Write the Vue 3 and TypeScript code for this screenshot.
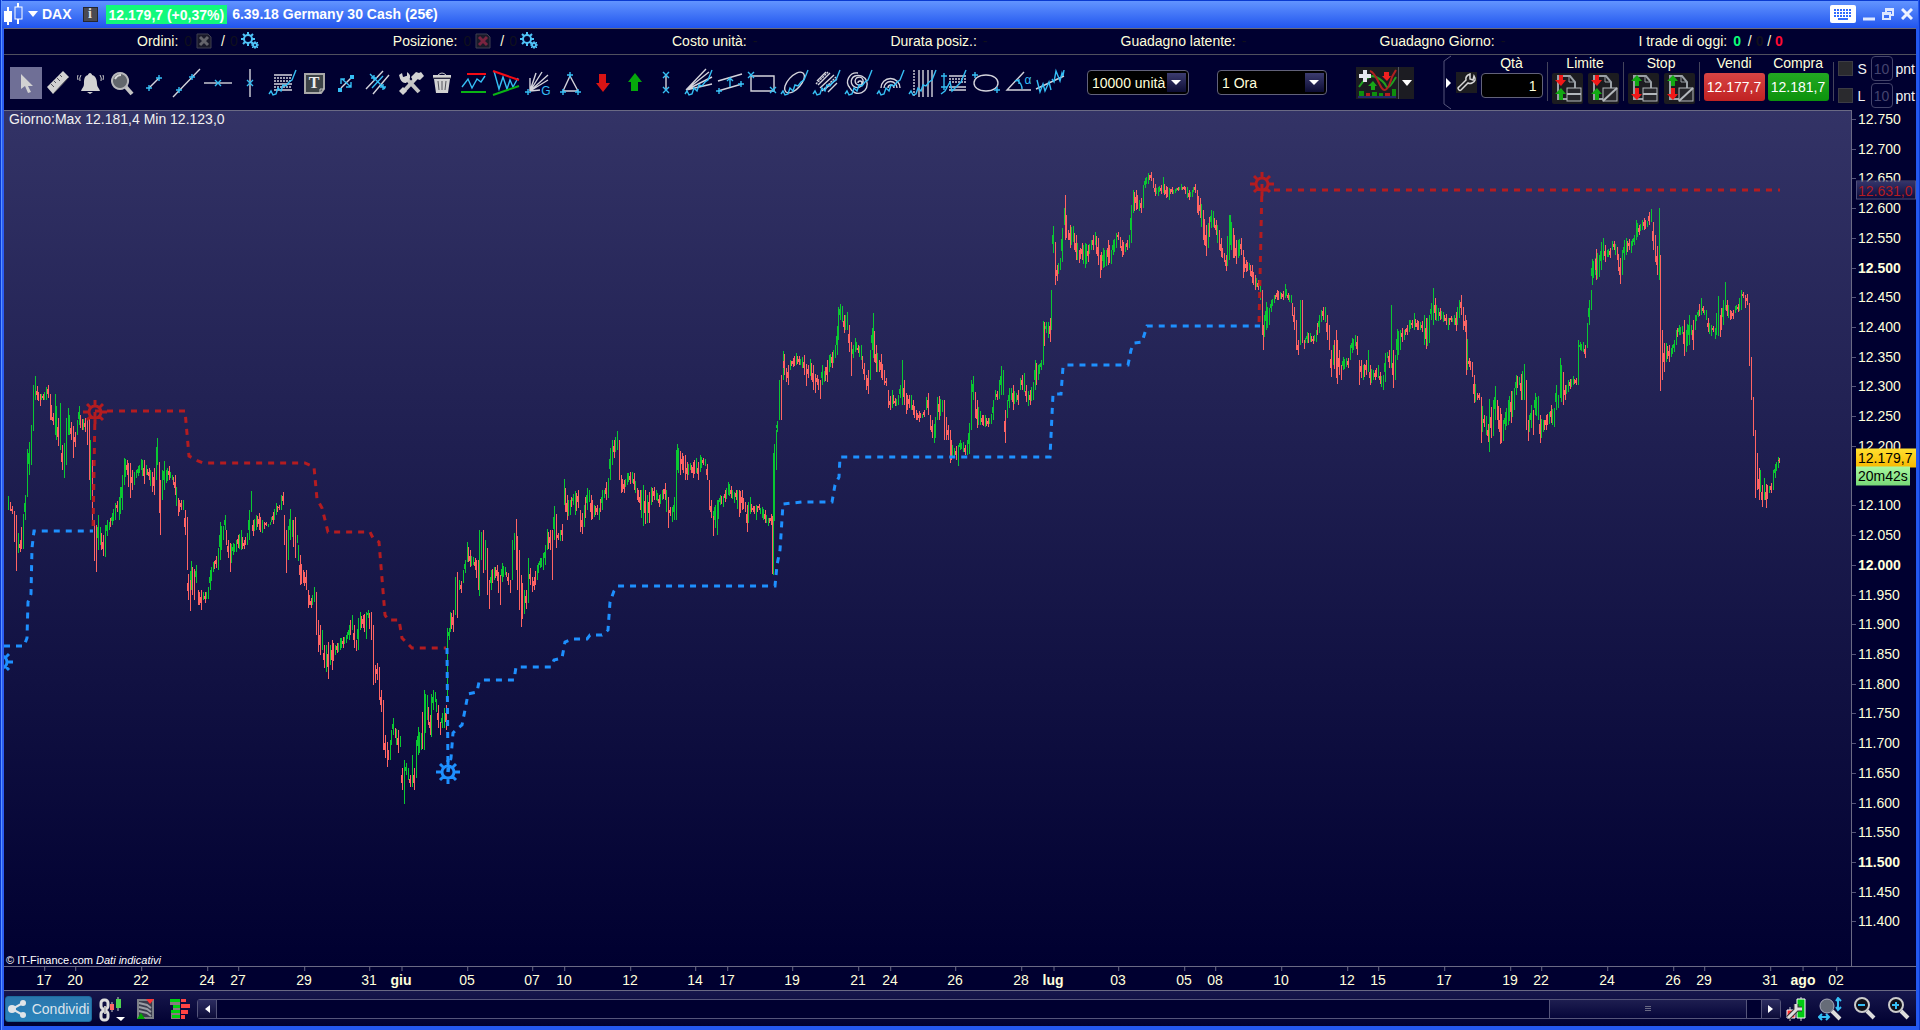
<script setup lang="ts">
type Shape = [kind: string, d: string]
interface Tool {
  name: string
  shapes: Shape[]
  label?: { x: number; y: number; text: string; cls: string }
}

const plus = (x: number, y: number) => `M${x - 3} ${y}h6M${x} ${y - 3}v6`
const cross = (x: number, y: number) => `M${x - 3} ${y - 3}l6 6M${x - 3} ${y + 3}l6-6`
const curve = 'M3 27l2-3 2 4 3-1 2-6 3 3 2-6 3 1 3-4 3-2 4-10'

const tools: Tool[] = [
  { name: 'Selezione', shapes: [['fill', 'M11 7v15l4-3 3 7 3-1-3-6h5z']] },
  { name: 'Righello', shapes: [['fill', 'M5 20L21 4l6 6L11 27z'], ['dark', 'M9 17l3 3M12 14l2 2M15 11l3 3M18 8l2 2M12 26l14-15']] },
  {
    name: 'Allarme',
    shapes: [
      ['fill', 'M16 6c-1 0-2 1-2 2-4 1-4 5-4 9 0 3-2 4-3 7h19c-1-3-3-4-3-7 0-4-1-8-5-9 0-1-1-2-2-2z'],
      ['fill', 'M13 25h6l-3 2z'],
      ['thin', 'M7 8q-2 3-1 6M4 8q-1 2 0 5M26 8q2 3 1 6M29 8q1 2 0 5'],
    ],
  },
  { name: 'Lente', shapes: [['handle', 'M19 19l7 8'], ['lens', 'M14 6a8 8 0 1 0 .1 0z'], ['shine', 'M9 12q2-4 6-4']] },
  { name: 'Segmento', shapes: [['line', 'M11 21L21 11'], ['blue', plus(11, 21) + plus(21, 11)]] },
  { name: 'Retta', shapes: [['line', 'M3 30L30 2'], ['blue', plus(9, 23) + plus(22, 10)]] },
  { name: 'Orizzontale', shapes: [['line', 'M2 16h28'], ['blue', cross(16, 16)]] },
  { name: 'Verticale', shapes: [['line', 'M16 2v28'], ['blue', cross(16, 16)]] },
  { name: 'Ritracciamenti', shapes: [['line', 'M8 8h18M8 17h18M8 23h18'], ['dots', 'M8 11h18M8 14h18M8 20h18'], ['blue', curve]] },
  { name: 'Testo', shapes: [['box', 'M7 7h19v15l-3 4H7z'], ['thin', 'M22 26v-4h4']], label: { x: 16, y: 21, text: 'T', cls: 'serif' } },
  { name: 'Estensione', shapes: [['line', 'M11 21L21 11'], ['bluefill', 'M8 21h4v4H8zM20 8h4v4h-4z'], ['blue', 'M11 17v-5h4M12 12l9 8M21 15v5h-5']] },
  { name: 'Parallele', shapes: [['line', 'M4 22L21 4M11 27L27 8'], ['blue', 'M8 7l15 15' + plus(12, 11) + plus(21, 20) + 'M10 21l11-12']] },
  {
    name: 'Strumenti',
    shapes: [['handle', 'M9 25L24 9'], ['handle', 'M11 10l14 15'], ['fill', 'M5 8l3-2 1 4 4-1v-4q5 3 2 8l-3 3q-5 1-7-8zM17 10l5-5 3 1 2-1 3 4-4 4-3-1-3 3z'], ['fill', 'M5 24l4-4 4 4-4 4z']],
  },
  {
    name: 'Cestino',
    shapes: [['fill', 'M8 12h16l-2 14H10zM7 8h18v3H7z'], ['thin', 'M12 8q4-4 8 0'], ['dark', 'M12 14l1 9M16 14v9M20 14l-1 9M7 11h18']],
  },
  { name: 'Supporto', shapes: [['blue', 'M4 20l6-8 4 9 5-9 4 3 4-6'], ['red', 'M9 7h19'], ['green', 'M3 25h25']] },
  { name: 'Triangoli', shapes: [['blue', 'M4 4l5 18 4-12 4 12 3-9 3 7 5-9'], ['red', 'M3 4l26 9'], ['green', 'M3 28l26-9']] },
  { name: 'Gann', shapes: [['line', 'M8 24V11M8 24L14 6M8 24L20 5M8 24L26 8M8 24l18-11M8 24l10-1'], ['blue', plus(6, 25)]], label: { x: 24, y: 28, text: 'G', cls: 'cyan' } },
  { name: 'Triangolo', shapes: [['line', 'M16 9L9 24h15z'], ['blue', plus(16, 8) + plus(9, 25) + plus(24, 25)]] },
  { name: 'Freccia giù', shapes: [['redfill', 'M13 7h7v9h4l-7 9-7-9h3z']] },
  { name: 'Freccia su', shapes: [['greenfill', 'M13 24h7v-9h4l-7-9-7 9h3z']] },
  { name: 'Misura', shapes: [['line', 'M16 9v14'], ['blue', cross(16, 8) + cross(16, 23)]] },
  { name: 'Ventaglio', shapes: [['line', 'M4 23L24 2M4 23L30 10M4 23l26-6M4 23L27 5'], ['blue', curve]] },
  { name: 'Canale', shapes: [['line', 'M4 14l24-7M4 24l24-7'], ['blue', plus(5, 24) + plus(27, 17) + 'M16 20v-8M13 14l3-3 3 3']] },
  { name: 'Rettangolo', shapes: [['line', 'M5 9h23v15H5z'], ['blue', cross(5, 8) + cross(27, 23)]] },
  { name: 'Ellisse inclinata', shapes: [['line', 'M8 25C2 19 18 1 25 6 31 11 16 30 8 25z'], ['blue', curve]] },
  { name: 'Linee di velocità', shapes: [['line', 'M7 14L16 5M8 18L20 6M10 21L24 8M14 23L27 12M18 25l9-9'], ['dots', 'M6 17L18 5M12 24L26 10'], ['blue', curve]] },
  { name: 'Spirale', shapes: [['line', 'M16 16a2 2 0 1 1 2 2 4 4 0 1 1 3-5 6 6 0 1 1-8-4 9 9 0 1 1-5 12'], ['line', 'M8 21a9 9 0 0 1 8-15'], ['blue', curve]] },
  { name: 'Archi', shapes: [['line', 'M7 21a9 9 0 0 1 19 0M10 21a6 6 0 0 1 13 0M14 21a3 3 0 0 1 6 0'], ['blue', curve]] },
  { name: 'Cicli', shapes: [['line', 'M13 3v27M17 3v27M22 3v27M26 3v27'], ['dots', 'M8 3v27'], ['blue', curve]] },
  { name: 'Estensioni', shapes: [['line', 'M11 9h17M11 20h17M11 23h17'], ['dots', 'M11 12h17M11 15h17'], ['blue', 'M3 9h6M6 6v17M3 20h6M3 27l4-3 5-9 2 9 5-5 4-4 5-12']] },
  { name: 'Ellisse', shapes: [['line', 'M16 8c16 0 16 16 0 16s-16-16 0-16z'], ['blue', plus(5, 8) + plus(27, 23)]] },
  { name: 'Angolo', shapes: [['line', 'M22 5L5 23h24'], ['blue', 'M20 22q0-5-4-8M13 14l4-1v4']], label: { x: 26, y: 17, text: 'α', cls: 'cyan' } },
  { name: 'Regressione', shapes: [['line', 'M2 22L30 9'], ['blue', 'M3 13l3 12 3-8 2 7 4-9 2 8M18 12l2 3 2-11 4 10 2-8 1 3 1-6']] },
]

/* Intraday range of the hourly bars: position, top and bottom on the chart grid. */
const range = `
8 496 510,12 506 514,14 511 542,16 515 571,18 533 553,20 540 552,23 514 549,25 495 520,27 449 497,29 442 475,31 425 465,33 385 431,35 376 400,37 386 400,40 394 406,43 394 400,46 387 400,48 385 398,50 394 420,53 413 425,55 394 435,58 418 446,60 403 450,62 445 470,64 443 478,66 418 465,68 408 435,71 422 440,73 426 458,75 432 447,77 420 435,79 406 425,82 419 430,85 418 432,87 420 445,89 419 480,92 460 520,94 520 561,96 525 572,98 515 550,100 527 545,103 535 556,105 525 557,107 520 536,109 522 530,112 513 525,115 503 520,117 501 512,119 497 520,122 475 510,124 458 485,127 460 475,130 463 498,132 470 490,134 472 485,138 466 476,141 459 470,144 460 484,146 465 475,149 468 480,152 472 492,154 468 495,156 450 480,157 438 465,159 462 513,160 480 535,162 470 500,164 461 490,166 470 483,169 466 480,172 475 480,175 475 495,178 498 516,181 500 510,183 500 510,185 510 535,187 517 570,188 574 600,190 580 611,191 561 590,194 569 600,196 565 583,198 590 605,201 590 610,203 592 600,205 592 603,208 587 599,210 570 590,213 562 572,216 556 568,218 548 570,220 522 560,223 526 540,225 515 530,226 530 545,228 540 558,230 543 572,233 543 555,236 540 552,238 535 548,241 530 550,244 540 549,247 533 545,249 510 540,251 491 512,253 520 536,256 515 530,259 513 530,262 520 533,266 522 526,270 522 525,273 512 524,276 503 515,279 505 510,281 495 510,283 492 505,284 515 545,286 530 573,288 526 560,290 509 540,292 520 537,295 517 558,297 535 543,300 555 585,303 570 583,306 570 590,308 590 608,311 598 608,314 587 602,316 592 635,318 620 652,320 625 655,322 630 650,324 645 668,326 645 672,328 642 679,330 645 665,332 640 670,335 645 655,337 643 653,340 638 650,343 637 648,346 635 643,349 625 640,352 615 630,354 625 648,356 640 651,358 618 650,360 612 630,363 615 628,366 612 639,368 610 618,371 612 640,373 625 685,375 665 683,377 663 680,379 667 700,381 690 712,383 700 750,385 735 758,387 742 767,388 750 760,390 740 760,393 718 735,395 728 738,398 730 753,400 736 747,402 768 790,404 760 804,406 763 775,408 768 780,410 775 787,412 755 787,414 768 790,416 740 778,418 727 755,421 733 750,424 690 750,427 695 720,430 715 735,431 694 737,433 690 710,435 692 702,438 705 728,440 722 735,442 713 728,444 708 728,446 705 730,447 628 700,449 628 640,450 612 632,453 610 632,455 577 615,457 572 618,459 580 590,461 581 593,463 570 583,465 560 573,467 542 562,470 550 567,473 557 565,475 558 570,478 560 590,
479 530 596,481 532 560,483 530 573,485 540 570,487 548 595,489 580 609,491 570 590,494 567 580,497 565 581,500 575 605,502 563 582,505 567 575,508 573 585,510 580 593,512 540 580,514 533 550,516 519 570,519 550 610,521 575 627,524 590 614,526 590 609,528 558 603,530 568 585,532 577 592,534 577 590,537 565 580,540 558 568,543 553 570,545 545 565,547 529 550,550 530 550,552 530 580,554 506 540,556 514 548,558 533 540,560 530 541,562 524 541,564 479 505,567 495 520,570 500 515,573 494 505,575 491 515,578 490 508,580 510 532,582 513 534,584 505 527,587 488 510,589 490 502,591 495 520,594 505 517,597 505 515,599 508 520,602 490 510,604 490 498,606 482 500,608 478 498,610 448 480,612 440 465,614 440 458,617 431 450,619 440 480,621 475 493,624 480 493,627 473 485,630 472 484,632 472 483,634 473 490,637 488 500,640 490 510,643 485 526,645 490 524,647 495 523,649 492 523,651 487 505,654 487 500,656 490 500,659 495 507,662 490 500,665 483 500,668 497 528,670 507 516,672 507 522,674 497 520,676 450 520,677 444 470,680 451 475,682 453 470,685 455 480,687 462 480,690 463 470,693 462 478,696 458 473,698 462 480,700 455 472,703 458 465,705 459 466,707 464 480,709 480 510,711 500 518,713 515 536,714 507 520,717 500 535,720 495 505,723 496 507,725 490 502,728 482 495,731 486 498,734 492 503,736 490 500,739 490 517,742 490 510,745 502 512,747 505 532,750 497 514,753 506 512,756 505 520,759 504 510,762 507 518,765 510 523,768 518 526,771 514 525,
772 516 574,773 453 575,776 430 470,777 421 432,779 380 420,781 375 420,783 351 380,784 354 375,786 368 382,788 365 385,790 360 370,793 358 367,796 353 365,799 356 365,802 357 368,804 355 375,806 364 386,808 365 378,810 359 376,813 365 390,815 374 393,817 375 385,820 380 399,822 365 385,824 371 382,827 360 382,829 355 372,832 352 368,835 345 358,837 326 355,838 307 340,840 304 320,842 306 322,844 315 333,847 312 330,849 325 352,851 342 376,853 345 358,855 338 352,858 345 353,861 345 360,864 363 380,866 375 390,868 370 394,870 350 380,872 328 350,873 313 358,876 345 372,879 360 372,881 354 378,884 370 385,886 378 386,888 390 408,890 396 410,892 390 408,895 398 406,898 395 405,900 385 398,902 360 405,904 380 405,906 393 414,909 395 408,911 395 410,913 400 415,916 410 420,919 411 422,922 414 418,924 410 417,926 397 410,928 393 415,930 415 430,932 420 438,934 425 443,935 417 438,937 397 420,939 396 420,942 400 412,944 400 440,946 417 440,948 425 440,950 430 463,951 440 460,954 448 458,956 446 460,958 445 466,960 440 450,963 442 452,965 445 455,967 440 455,969 423 454,971 380 430,973 376 400,975 392 418,977 400 428,980 411 425,982 415 425,985 415 427,988 418 427,991 414 424,993 400 420,995 390 400,997 391 400,999 380 399,1001 366 395,1003 370 395,1005 410 443,1007 400 418,1009 388 408,1011 388 400,1013 385 410,1016 393 402,1018 390 405,1020 378 390,1022 375 390,1024 373 392,1026 385 402,1028 391 406,1030 390 405,1033 382 400,1035 360 390,1038 365 380,1041 360 370,
1043 321 365,1046 322 333,1048 322 338,1050 318 342,1051 290 330,1053 226 253,1055 242 285,1057 265 281,1060 258 270,1062 228 262,1064 208 225,1065 195 240,1068 230 240,1070 225 248,1073 226 242,1076 235 260,1079 250 263,1082 243 260,1085 243 268,1088 245 262,1091 240 250,1093 235 250,1095 232 245,1098 238 265,1100 255 278,1103 248 268,1106 250 266,1108 240 265,1111 250 264,1113 240 255,1116 233 248,1118 232 240,1120 237 248,1122 240 257,1125 244 252,1127 240 250,1129 235 248,1131 205 243,1133 190 213,1136 190 210,1139 200 211,1141 198 213,1143 185 208,1145 178 188,1148 173 184,1151 172 181,1153 178 188,1155 184 196,1158 187 196,1161 185 194,1163 177 193,1166 186 198,1169 188 200,1172 187 194,1175 189 193,1178 187 191,1181 184 190,1184 186 190,1187 187 198,1189 190 200,1192 190 197,1195 184 193,1197 190 213,1200 198 218,1203 210 240,1206 225 256,1208 223 248,1211 210 228,1213 211 227,1216 220 235,1219 230 250,1221 238 257,1224 253 262,1226 255 271,1229 215 260,1230 215 245,1233 228 258,1236 240 264,1238 240 258,1241 238 255,1243 250 278,1246 260 272,1249 263 270,1252 265 283,1255 275 290,1258 280 290,1260 281 300,1262 290 335,1263 325 350,1266 302 330,1269 308 325,1271 300 312,1274 295 303,1277 290 300,1280 292 299,1283 291 300,1285 284 298,1288 293 300,1291 295 303,1294 307 330,1296 320 350,1298 340 355,1300 300 345,1302 300 343,1304 340 349,1307 332 343,1310 333 342,1313 336 344,1316 330 342,1319 315 333,1321 310 322,1323 307 320,1325 307 322,1327 315 340,1329 325 350,1331 350 377,1333 345 365,1336 330 378,1337 340 384,1339 350 375,1341 365 380,1343 357 370,1346 358 367,1348 358 368,1350 345 360,1352 338 353,1355 335 346,1357 336 355,1359 360 385,1361 360 378,1363 365 380,1366 360 375,1368 350 372,1370 365 385,1373 370 380,1375 370 380,1378 365 378,1380 372 384,1383 375 390,1385 353 382,1387 352 358,1389 350 368,1391 305 368,1393 350 388,1395 355 380,1397 329 360,1400 330 350,1402 328 342,1404 330 340,1407 325 335,1409 320 332,1412 320 328,1414 313 330,1417 320 330,1420 322 330,1422 321 332,
1424 315 345,1426 318 349,1429 315 343,1431 303 320,1433 288 325,1435 298 320,1438 308 321,1440 308 320,1443 312 322,1446 314 325,1448 318 330,1451 316 322,1454 315 325,1456 312 331,1459 300 318,1461 295 315,1463 307 330,1465 315 332,1466 320 375,1469 358 367,1472 362 377,1474 375 403,1477 393 400,1479 393 400,1481 397 443,1484 415 427,1486 416 435,1488 424 442,1489 399 452,1491 407 438,1493 400 436,1495 386 420,1497 400 420,1500 408 444,1503 420 441,1505 412 430,1508 400 425,1511 391 423,1514 388 410,1516 375 395,1519 377 385,1521 374 400,1524 364 400,1526 380 430,1528 420 441,1531 405 428,1533 410 435,1535 393 415,1538 396 420,1540 415 443,1543 420 432,1546 415 430,1549 412 424,1551 405 423,1554 408 427,1556 385 410,1558 395 408,1560 358 398,1563 372 405,1565 385 400,1568 380 392,1570 379 389,1573 376 385,1576 378 385,1578 340 385,1580 342 350,1583 342 352,1585 345 358,1587 323 348,1589 300 325,1591 290 310,1592 259 285,1595 258 275,1596 249 280,1599 255 277,1601 242 270,1603 238 260,1605 245 262,1607 250 257,1610 248 258,1612 241 250,1614 241 250,1617 247 260,1620 258 284,1622 250 275,1624 240 260,1626 238 255,1629 239 250,1631 241 253,1634 235 245,1636 220 240,1639 225 235,1642 220 230,1644 218 230,1647 221 227,1649 212 225,1651 209 222,1653 222 250,1655 235 262,1657 246 275,1659 208 280,1660 255 391,1662 330 380,1664 343 372,1666 343 362,1669 345 362,1671 348 357,1674 340 352,1676 330 345,1679 325 335,1682 326 334,1684 320 356,1686 330 352,1689 315 345,1691 325 335,1693 320 350,1695 315 330,1698 310 317,1701 298 315,1703 306 313,1706 310 320,1708 318 332,1711 325 336,1713 326 332,1715 328 339,1718 296 336,1720 315 337,1723 300 325,1725 282 310,1727 300 316,1730 310 320,1733 310 319,1735 306 313,1738 304 312,1741 290 310,1743 292 298,1745 295 308,1747 294 305,1749 303 366,1751 357 400,1753 397 436,1755 430 498,1757 453 490,1759 468 500,1760 470 492,1762 485 507,1764 478 500,1766 484 508,1769 486 493,1771 483 493,1773 470 490,1775 464 478,1778 457 468,1779 458 463`

const samples = range.split(',').map((s) => s.trim().split(' ').map(Number))

/* Wicks are one unit wide, the bodies of wide bars two; each colour is drawn as one path. */
const paths = { up: '', down: '', upBody: '', downBody: '' }
let previous = samples[0]
samples.forEach((bar, i) => {
  const [x, top, bottom] = bar
  const shift = top + bottom - previous[1] - previous[2]
  const rising = Math.abs(shift) < 12 ? i % 2 === 0 : shift < 0
  const side = rising ? 'up' : 'down'
  const inner = Math.round((bottom - top) / 3)
  if (x - previous[0] > 2) {
    const midTop = Math.round((top + previous[1]) / 2) + (i % 3)
    const midBottom = Math.round((bottom + previous[2]) / 2) - (i % 4)
    paths[i % 3 ? side : rising ? 'down' : 'up'] += `M${x - 1.5} ${midTop}V${Math.max(midBottom, midTop + 3)}`
  }
  paths[side] += `M${x + 0.5} ${top}V${bottom}`
  if (bottom - top < 40 && i % 2) paths[rising ? 'upBody' : 'downBody'] += `M${x} ${top + inner}V${bottom - inner}`
  previous = bar
})

const stops = [
  { kind: 'long', d: 'M4 646H24L27 638 28 602 31 594 32 548 34 531H93' },
  { kind: 'short', d: 'M95 412L93 532' },
  { kind: 'short', d: 'M95 411H185L189 456 198 461 203 463H305L314 467 317 499 322 508 328 532H370L373 538 379 542 385 615 388 620H399L402 638 410 646 412 648H446' },
  { kind: 'long', d: 'M447 648L448 772' },
  { kind: 'long', d: 'M448 772L451 758 453 733 457 729 462 725 465 710 468 694 477 692 479 682 482 680H514L516 667H551L554 660 562 658 565 642 572 639H587L590 635 602 635 608 630 610 602 614 591 618 586H775L777 565 780 550 783 504 802 502H832L835 485 839 477 840 457H1050L1053 394H1061L1063 367 1066 365H1128L1131 350 1134 343 1142 342 1147 326H1260' },
  { kind: 'short', d: 'M1262 184L1259 326' },
  { kind: 'short', d: 'M1262 190H1780' },
]
const markers = [
  { kind: 'long', x: 1, y: 662 },
  { kind: 'short', x: 95, y: 412 },
  { kind: 'long', x: 448, y: 772 },
  { kind: 'short', x: 1262, y: 184 },
]
const gear = 'M-6 0a6 6 0 1 0 12 0a6 6 0 1 0-12 0M6 0h6M-6 0h-6M0 6v6M0-6v-6M4 4l4 4M-4-4l-4-4M4-4l4-4M-4 4l-4 4'

const PRICE_TOP = 12750
const topOf = (price: number) => `${((8 + ((PRICE_TOP - price) / 50) * 29.72) / 855) * 100}%`
const prices = Array.from({ length: 28 }, (_, i) => PRICE_TOP - i * 50).filter((p) => p !== 12150)
const priceText = (p: number) => `${Math.floor(p / 1000)}.${String(p % 1000).padStart(3, '0')}`

const dates: [string, number][] = [
  ['17', 44], ['20', 75], ['22', 141], ['24', 207], ['27', 238], ['29', 304], ['31', 369], ['giu', 401], ['05', 467], ['07', 532],
  ['10', 564], ['12', 630], ['14', 695], ['17', 727], ['19', 792], ['21', 858], ['24', 890], ['26', 955], ['28', 1021], ['lug', 1053],
  ['03', 1118], ['05', 1184], ['08', 1215], ['10', 1281], ['12', 1347], ['15', 1378], ['17', 1444], ['19', 1510], ['22', 1541],
  ['24', 1607], ['26', 1673], ['29', 1704], ['31', 1770], ['ago', 1803], ['02', 1836],
]
const leftOf = (x: number) => `${((x - 4) / 1912) * 100}%`

const upper = { up: 'M7 13V8H3l6-6 5 6h-3v5z', down: 'M7 2v5H3l6 6 5-6h-3V2z' }
const lower = { up: 'M7 27v-6H3l6-6 5 6h-3v6z', down: 'M7 15v6H3l6 6 5-6h-3v-6z' }
</script>

<template>
  <main class="window">
    <header class="title">
      <svg class="logo" width="20" height="24" viewBox="0 0 20 24">
        <path d="M4 5v18" stroke="#fff" stroke-width="2" /><rect x="0" y="9" width="8" height="11" fill="#fff" />
        <path d="M14 1v4M14 17v5" stroke="#fff" stroke-width="2" /><rect x="11" y="5" width="7" height="12" fill="none" stroke="#fff" stroke-width="1" />
      </svg>
      <svg width="10" height="6" viewBox="0 0 10 6"><path d="M0 0h10L5 6z" fill="#fff" /></svg>
      <strong class="symbol">DAX</strong>
      <button class="info" aria-label="Informazioni">i</button>
      <strong class="quote">12.179,7 (+0,37%)</strong>
      <strong class="instrument">6.39.18 Germany 30 Cash (25€)</strong>
      <nav class="controls">
        <button aria-label="Tastiera">
          <svg width="26" height="18" viewBox="0 0 26 18"><rect width="26" height="18" rx="2" fill="#fff" /><path d="M4 5h18M4 8h18M4 11h18" stroke="#2f6bff" stroke-width="2" stroke-dasharray="2 1" /><path d="M8 14h10" stroke="#2f6bff" stroke-width="2" /></svg>
        </button>
        <button aria-label="Riduci"><svg width="12" height="14" viewBox="0 0 12 14"><path d="M0 12h12" stroke="#dfe8ff" stroke-width="3" /></svg></button>
        <button aria-label="Ripristina"><svg width="12" height="12" viewBox="0 0 12 12" fill="none" stroke="#dfe8ff"><path d="M4 4V1h7v6H8M4 2h7M1 5h7v6H1zM1 6h7" stroke-width="2" /></svg></button>
        <button aria-label="Chiudi"><svg width="12" height="12" viewBox="0 0 12 12"><path d="M1 1l10 10M11 1L1 11" stroke="#eef3ff" stroke-width="3" /></svg></button>
      </nav>
    </header>

    <section class="status">
      <div v-for="item in ['Ordini:', 'Posizione:']" :key="item" class="stat">
        {{ item }}<span class="dim">0</span>
        <button :class="['cancel', { hot: item === 'Posizione:' }]" aria-label="Annulla">
          <svg width="16" height="16" viewBox="0 0 16 16"><path d="M1 1h11l3 3v11H1z" fill="#1a1a2a" stroke="#3e3e50" /><path d="M4 4l8 8M12 4l-8 8" stroke="currentColor" stroke-width="3" /></svg>
        </button>
        <span class="slash">/</span><span class="dim">0</span>
        <svg width="19" height="18" viewBox="0 0 19 18" fill="none" stroke="#4fc3f7">
          <circle cx="7" cy="7" r="4" stroke-width="2" /><path d="M7 0v3M7 11v3M0 7h3M11 7h3M2 2l2 2M10 10l2 2M12 2l-2 2M4 10l-2 2" stroke-width="2" />
          <circle cx="14" cy="13" r="2" stroke-width="2" /><path d="M14 9v2M14 15v2M10 13h2M16 13h2M11 10l6 6M17 10l-6 6" /><circle cx="14" cy="13" r="1" fill="#000030" stroke="none" />
        </svg>
      </div>
      <div v-for="item in ['Costo unità:', 'Durata posiz.:', 'Guadagno latente:', 'Guadagno Giorno:']" :key="item" class="stat">
        {{ item }}<span class="dim">-</span>
      </div>
      <div class="stat">I trade di oggi:<b class="won">0</b> / <b class="none">0</b> / <b class="lost">0</b></div>
    </section>

    <section class="toolbar">
      <div class="tools">
        <button v-for="(tool, i) in tools" :key="tool.name" :class="{ active: i === 0 }" :aria-label="tool.name">
          <svg width="32" height="32" viewBox="0 0 32 32">
            <path v-for="(s, n) in tool.shapes" :key="n" :class="s[0]" :d="s[1]" />
            <text v-if="tool.label" :x="tool.label.x" :y="tool.label.y" :class="tool.label.cls">{{ tool.label.text }}</text>
          </svg>
        </button>
      </div>
      <label class="pick units"><select aria-label="Unità"><option>10000 unità</option></select></label>
      <label class="pick period"><select aria-label="Periodo"><option>1 Ora</option></select></label>
      <div class="indicators">
        <button aria-label="Indicatori">
          <svg width="42" height="32" viewBox="0 0 42 32" fill="none">
            <path d="M3 20Q12 6 20 10T30 19 40 10" stroke="#1fa01f" stroke-width="2" /><path d="M14 4Q18 5 24 18T36 10L40 3" stroke="#b02020" stroke-width="2" />
            <path d="M9 3v12M3 9h12" stroke="#e4e4ee" stroke-width="4" /><path d="M28 5h5v4h2l-4 5-5-5h2z" fill="#f02020" /><path d="M15 23h4v-4h2l-4-5-5 5h3z" fill="#18a818" />
            <path d="M3 24h5v5H3zM16 25h5v4h-5zM23 26h4v3h-4zM36 22h4v7h-4z" fill="#0d900d" /><path d="M10 26h4v3h-4zM29 26h5v3h-5z" fill="#b81c1c" /><path d="M2 30h38" stroke="#2a3ab0" />
          </svg>
        </button>
        <button class="more" aria-label="Altri indicatori"><svg width="10" height="6" viewBox="0 0 10 6"><path d="M0 0h10L5 6z" fill="#fff" /></svg></button>
      </div>

      <div class="trade">
        <svg class="bracket" width="9" height="55" viewBox="0 0 9 55" fill="none"><path d="M8 1L1 6V49l7 5" stroke="#55557a" /><path d="M3 23v10l5-5z" fill="#fff" /></svg>
        <button class="wrench" aria-label="Impostazioni">
          <svg width="21" height="21" viewBox="0 0 21 21"><path d="M3 18q-2-2 0-3l7-7q-1-4 4-6v5l3 1 1-4q3 5-2 7-2 1-4 0l-7 7q-1 1-2 0z" fill="none" stroke="#d8d8d8" stroke-width="1.5" /></svg>
        </button>
        <div class="col qty"><label for="qty">Qtà</label><input id="qty" value="1" /></div>
        <i class="rule"></i>
        <div v-for="kind in ['Limite', 'Stop']" :key="kind" class="pair">
          <div class="col">
            <span>{{ kind }}</span>
            <div class="icons">
              <button v-for="n in 2" :key="n" :aria-label="kind + ' ' + n">
                <svg width="31" height="31" viewBox="0 0 31 31">
                  <path d="M6 3h12l5 6v17H6z" fill="#1c1c20" stroke="#9aa0a6" stroke-width="2" /><path d="M17 3v6h6" fill="none" stroke="#9aa0a6" />
                  <path :class="kind === 'Stop' ? 'rise' : 'fall'" :d="kind === 'Stop' ? upper.up : upper.down" />
                  <path :class="kind === 'Stop' ? 'fall' : 'rise'" :d="kind === 'Stop' ? lower.down : lower.up" />
                  <rect x="15" y="15" width="14" height="13" fill="#26262a" stroke="#b4b8bc" />
                  <path :d="n === 1 ? 'M15 21h14' : 'M15 28L29 15'" stroke="#b4b8bc" stroke-width="2" />
                </svg>
              </button>
            </div>
          </div>
          <i class="rule"></i>
        </div>
        <div class="deals">
          <div class="col"><span>Vendi</span><button class="sell">12.177,7</button></div>
          <div class="col"><span>Compra</span><button class="buy">12.181,7</button></div>
        </div>
        <i class="rule"></i>
        <div class="limits">
          <div v-for="side in ['S', 'L']" :key="side" class="limit">
            <label><input type="checkbox" /><span>{{ side }}</span></label>
            <label><input class="points" value="10" disabled /><span>pnt</span></label>
          </div>
        </div>
      </div>
    </section>

    <section class="chart">
      <div class="pane">
        <svg class="plot" viewBox="4 111 1847 855" preserveAspectRatio="none">
          <path class="up" :d="paths.up" /><path class="down" :d="paths.down" />
          <path class="up body" :d="paths.upBody" /><path class="down body" :d="paths.downBody" />
          <path v-for="(s, i) in stops" :key="i" :class="['stop', s.kind]" :d="s.d" />
          <path v-for="(m, i) in markers" :key="'m' + i" :class="['marker', m.kind]" :d="gear" :transform="`translate(${m.x} ${m.y})`" />
        </svg>
        <p class="day">Giorno:Max 12.181,4 Min 12.123,0</p>
        <p class="credit">© IT-Finance.com <em>Dati indicativi</em></p>
      </div>
      <div class="prices">
        <span v-for="p in prices" :key="p" :class="['price', { major: p % 500 === 0 }]" :style="{ top: topOf(p) }">{{ priceText(p) }}</span>
        <span class="tag level" :style="{ top: topOf(12631) }">12.631,0</span>
        <span class="tag last" :style="{ top: topOf(12180) }">12.179,7</span>
        <span class="tag timer" :style="{ top: topOf(12149) }">20m42s</span>
      </div>
    </section>

    <section class="dates">
      <span v-for="([text, x], i) in dates" :key="i" :class="{ major: text.length === 3 }" :style="{ left: leftOf(x) }">{{ text }}</span>
    </section>

    <footer class="bottom">
      <button class="share">
        <svg width="19" height="20" viewBox="0 0 19 20"><path d="M15 4L4 10l11 6" fill="none" stroke="#e0e4e8" stroke-width="2" /><circle cx="15" cy="4" r="3" fill="#e0e4e8" /><circle cx="4" cy="10" r="4" fill="#e0e4e8" /><circle cx="15" cy="16" r="3" fill="#e0e4e8" /></svg>
        Condividi
      </button>
      <button class="link" aria-label="Collega">
        <svg width="26" height="26" viewBox="0 0 26 26" fill="none"><rect x="2" y="4" width="7" height="9" rx="3" stroke="#ddd" stroke-width="3" /><rect x="2" y="15" width="7" height="9" rx="3" stroke="#ddd" stroke-width="3" /><path d="M6 10v8" stroke="#bbb" stroke-width="2" /><path d="M13 6v10M19 1v14" stroke="#ccc" /><path d="M11 8h4v6h-4z" fill="#f66" /><path d="M17 3h5v9h-5z" fill="#4fd34f" /><path d="M17 21h9l-4 4z" fill="#fff" /></svg>
      </button>
      <button class="lines" aria-label="Ordini">
        <svg width="17" height="20" viewBox="0 0 17 20"><path d="M1 1h15v18H1z" fill="#3a3c4c" stroke="#7d8088" stroke-width="2" /><path d="M2 4l8 2 4 3M2 8l8 2 4 3M2 12l8 2 4 3" fill="none" stroke="#9a9ca4" stroke-width="2" /><path d="M9 0h8l-4 5z" fill="#f33" /><path d="M0 20h8l-4-6z" fill="#0a0" /></svg>
      </button>
      <button class="book" aria-label="Book">
        <svg width="20" height="20" viewBox="0 0 20 20"><path d="M0 0h10v20H1V11h2V6H0z" fill="#8a7a80" /><path d="M0 0h10v3H0zM3 6h7v3H3zM1 11h9v3H1zM2 16h8v3H2z" fill="#00d010" /><path d="M11 0h5v3h-5zM11 5h9v4h-9zM11 11h7v4h-7zM11 16h4v4h-4z" fill="#f44" /></svg>
      </button>
      <div class="scroll">
        <button aria-label="Indietro"><svg width="6" height="8" viewBox="0 0 6 8"><path d="M6 0v8L1 4z" fill="#fff" /></svg></button>
        <div class="track"><div class="thumb"><i></i></div></div>
        <button aria-label="Avanti"><svg width="6" height="8" viewBox="0 0 6 8"><path d="M0 0v8l5-4z" fill="#fff" /></svg></button>
      </div>
      <button class="setup" aria-label="Stile">
        <svg width="20" height="26" viewBox="0 0 20 26" fill="none"><path d="M4 11v14M15 1v24" stroke="#ccc" /><path d="M1 14h8v8H1z" fill="#f33" stroke="#fff" /><path d="M11 3h8v19h-8z" fill="#0c1" stroke="#fff" /><path d="M2 22l9-9M10 8v5h6" stroke="#333" stroke-width="5" /><path d="M2 22l9-9M10 8v5h6" stroke="#ddd" stroke-width="3" /></svg>
      </button>
      <button class="fit" aria-label="Adatta">
        <svg width="24" height="24" viewBox="0 0 24 24" fill="none"><path d="M14 14l8 8" stroke="#ddd" stroke-width="4" /><circle cx="9" cy="9" r="7" fill="#666c78" stroke="#aab" /><path d="M20 2v11M18 4l2-3 3 3M18 10l2 3 3-3M1 20h10M4 17l-3 3 3 3M8 17l3 3-3 3" stroke="#35bff5" stroke-width="2" /></svg>
      </button>
      <button v-for="sign in ['M5 8h7', 'M5 8h7M9 5v7']" :key="sign" class="zoom" aria-label="Zoom">
        <svg width="23" height="23" viewBox="0 0 23 23" fill="none"><path d="M14 14l7 7" stroke="#ddd" stroke-width="4" /><circle cx="9" cy="8" r="7" fill="#101018" stroke="#ccc" stroke-width="2" /><path :d="sign" stroke="#35bff5" stroke-width="2" /></svg>
      </button>
    </footer>
  </main>
</template>

<style>
body { margin: 0; background: #000030; }
</style>

<style scoped>
* { box-sizing: border-box; }
.window {
  display: flex; flex-direction: column; min-height: 100vh; padding: 0 4px 4px;
  background: linear-gradient(90deg, #0a3ad0 0 1px, #5c93ff 1px 2px, #2a5cf2 2px 4px, #2458f0 4px calc(100% - 1px), #0a3ad0 calc(100% - 1px));
  color: #ffffdc; font: 14px/16px "Liberation Sans", Arial, sans-serif;
}
button, input, select { font: inherit; color: inherit; padding: 0; border: 0; background: none; }
button { display: flex; align-items: center; justify-content: center; }
svg { display: block; flex: none; }
p { margin: 0; }

.title { display: flex; align-items: center; height: 28px; margin: 0 -2px; padding: 0 5px 1px 2px; border-top: 1px solid #0a3ad0; background: linear-gradient(#6294ff, #2155ee); color: #fff; }
.logo { margin-right: 4px; }
.symbol { margin-left: 4px; }
.info { width: 15px; height: 15px; margin: 0 8px 0 11px; background: #4a4a52; border: 1px solid #26262c; color: #ddd; font: bold 14px/12px "Liberation Serif", serif; }
.quote { padding: 2px 3px 1px; background: #12f97c; }
.instrument { margin-left: 5px; }
.controls { display: flex; align-items: center; gap: 7px; margin-left: auto; }

.status { display: flex; justify-content: space-evenly; align-items: center; height: 26px; padding-bottom: 2px; border-top: 1px solid #6a6a78; background: #000030; white-space: pre; }
.stat { display: flex; align-items: center; }
.dim { margin-left: 6px; color: #10101c; }
.cancel { margin-left: 4px; color: #65656c; }
.hot { color: #7a2440; }
.slash { margin-left: 9px; }
.stat .slash + .dim { margin: 0 3px 0 5px; }
.won { margin: 0 3px 0 6px; color: #0cff79; }
.none { color: #10101c; }
.lost { color: #ff0a32; }

.toolbar { display: flex; align-items: center; height: 56px; padding: 0 1px 0 6px; border-top: 1px solid #50505e; background: #000030; }
.tools { display: flex; }
.tools button { width: 32px; height: 32px; }
.tools .active { background: #6f6f96; }
.tools path { fill: none; stroke-width: 1; }
.tools .fill { fill: #d2d2d2; }
.tools .line { stroke: #d4d4dc; stroke-width: 1.4; }
.tools .thin { stroke: #c8c8c8; }
.tools .dark { stroke: #55555c; }
.tools .dots { stroke: #d4d4dc; stroke-width: 1.4; stroke-dasharray: 2 1; }
.tools .blue { stroke: #35bff5; stroke-width: 1.4; }
.tools .bluefill { fill: #35bff5; }
.tools .handle { stroke: #c4c4c4; stroke-width: 4; }
.tools .lens { fill: #62666c; stroke: #b8b8bc; stroke-width: 2; }
.tools .shine { stroke: #d8d8d8; stroke-width: 2; }
.tools .box { fill: #3d4346; stroke: #a8a8a8; stroke-width: 2; }
.tools .red { stroke: #f50a14; stroke-width: 2; }
.tools .green { stroke: #0ab414; stroke-width: 2; }
.tools .redfill { fill: #d81414; }
.tools .greenfill { fill: #06a80c; }
.tools text { text-anchor: middle; }
.tools .serif { fill: #eee; font: bold 16px "Liberation Serif", serif; }
.tools .cyan { fill: #35bff5; font: 12px "Liberation Sans", sans-serif; }

.pick { position: relative; height: 25px; border: 1px solid #62627a; border-radius: 4px; background: #000; }
.pick::after { content: ""; position: absolute; right: 2px; top: 2px; width: 19px; height: 19px; background: linear-gradient(#3c3c70, #0c0c34); pointer-events: none; }
.pick::before { content: ""; position: absolute; z-index: 1; right: 7px; top: 9px; border: 5px solid transparent; border-top-color: #fff; border-bottom: 0; pointer-events: none; }
.pick select { width: 100%; height: 23px; padding-left: 4px; appearance: none; }
.units { width: 102px; margin-left: 21px; }
.period { width: 110px; margin-left: 28px; }
.indicators { display: flex; gap: 1px; margin-left: 29px; background: #55555c; }
.indicators button { background: #1c1c22; }
.indicators .more { width: 15px; }

.trade { display: flex; gap: 4px; height: 55px; margin-left: auto; }
.wrench { align-self: center; width: 21px; height: 21px; background: #1c1c20; }
.col { display: flex; flex-direction: column; align-items: center; gap: 2px; }
.qty { width: 62px; }
.qty input { width: 62px; height: 25px; padding-right: 5px; border: 1px solid #62627a; border-radius: 4px; background: #000; text-align: right; }
.rule { width: 1px; height: 39px; margin-top: 7px; background: #44445c; }
.pair { display: flex; gap: 4px; }
.icons { display: flex; gap: 5px; }
.icons button { background: #1c1c20; border-radius: 2px; }
.fall { fill: #f01818; }
.rise { fill: #12a812; }
.deals { display: flex; gap: 3px; }
.sell, .buy { width: 61px; height: 28px; border-radius: 3px; color: #fff; }
.sell { background: linear-gradient(#d84444, #c02222); }
.buy { background: linear-gradient(#22a822, #0c920c); }
.limits { display: flex; flex-direction: column; gap: 2px; padding-top: 1px; }
.limit { display: flex; gap: 4px; }
.limit label { display: flex; align-items: center; gap: 3px; color: #f4f4f4; }
.limit label:first-child { gap: 5px; }
.limit label:first-child span { width: 9px; }
.limit input[type="checkbox"] { appearance: none; width: 15px; height: 15px; margin: 0; background: #2a2a2e; border: 1px solid #3c3c44; }
.points { width: 22px; height: 25px; border: 1px solid #44446a; border-radius: 4px; color: #44446e; text-align: center; }

.chart { display: flex; flex: 1; background: #000030; }
.pane { position: relative; flex: 1; border: solid #6a6a84; border-width: 1px 1px 0 0; background: linear-gradient(#333366, #000030); }
.plot { position: absolute; width: 100%; height: 100%; }
.plot path { fill: none; }
.up { stroke: #0ac832; }
.down { stroke: #ff6464; }
.body { stroke-width: 2; }
.stop { stroke-width: 3; stroke-dasharray: 6 6; }
.marker { stroke-width: 3; }
.long { stroke: #1e90ff; }
.short { stroke: #b41c20; }
.day { position: absolute; left: 5px; top: 0; color: #f0f0f0; }
.credit { position: absolute; left: 2px; bottom: -2px; color: #fff; font-size: 11px; }
.prices { position: relative; width: 64px; margin-top: 1px; }
.price { position: absolute; left: 6px; transform: translateY(-50%); }
.price::before { content: ""; position: absolute; left: -6px; top: 8px; width: 4px; border-top: 1px solid #55557a; }
.major { font-weight: bold; }
.tag { position: absolute; left: 4px; height: 19px; padding-left: 2px; line-height: 18px; transform: translateY(-50%); }
.level { width: 60px; border: 1px solid #50507a; background: linear-gradient(#34346a, #0c0c3c); color: #b41c20; padding-left: 1px; }
.last { width: 60px; background: linear-gradient(#ffe030, #f8b800); color: #000; }
.timer { width: 54px; background: linear-gradient(#a8f8a0, #78d878); color: #000; }

.dates { position: relative; height: 24px; border-top: 1px solid #6a6a84; background: #000030; }
.dates span { position: absolute; top: 5px; transform: translateX(-50%); }
.dates span::before { content: ""; position: absolute; left: 50%; top: -5px; height: 4px; border-left: 1px solid #6a6a84; }

.bottom { display: flex; align-items: center; height: 36px; padding: 0 6px 0 1px; border-top: 1px solid #6a6a84; background: linear-gradient(#17174c, #000030); }
.share { gap: 5px; width: 87px; height: 26px; border: 1px solid #1c6a9c; border-radius: 3px; background: linear-gradient(#2a76ac, #2a84bc); color: #dce4ec; }
.link { margin-left: 7px; }
.lines { margin-left: 12px; }
.book { margin-left: 16px; }
.scroll { display: flex; flex: 1; height: 20px; margin: 0 5px 0 7px; border: 1px solid #55557a; border-radius: 3px; }
.scroll button { width: 19px; background: linear-gradient(#2c2c60, #0c0c38); border: 0 solid #55557a; border-right-width: 1px; }
.scroll button:last-child { border-width: 0 0 0 1px; }
.track { flex: 1; background: #000030; }
.thumb { display: flex; align-items: center; justify-content: center; width: 12.8%; height: 100%; margin-left: 86.3%; border: solid #55557a; border-width: 0 1px; background: linear-gradient(#1e1e50, #06063a); }
.thumb i { width: 6px; height: 5px; border: solid #6a6a84; border-width: 1px 0; background: linear-gradient(transparent 1px, #6a6a84 1px 2px, transparent 2px); }
.fit { margin-left: 12px; }
.zoom { margin-left: 11px; }
</style>
